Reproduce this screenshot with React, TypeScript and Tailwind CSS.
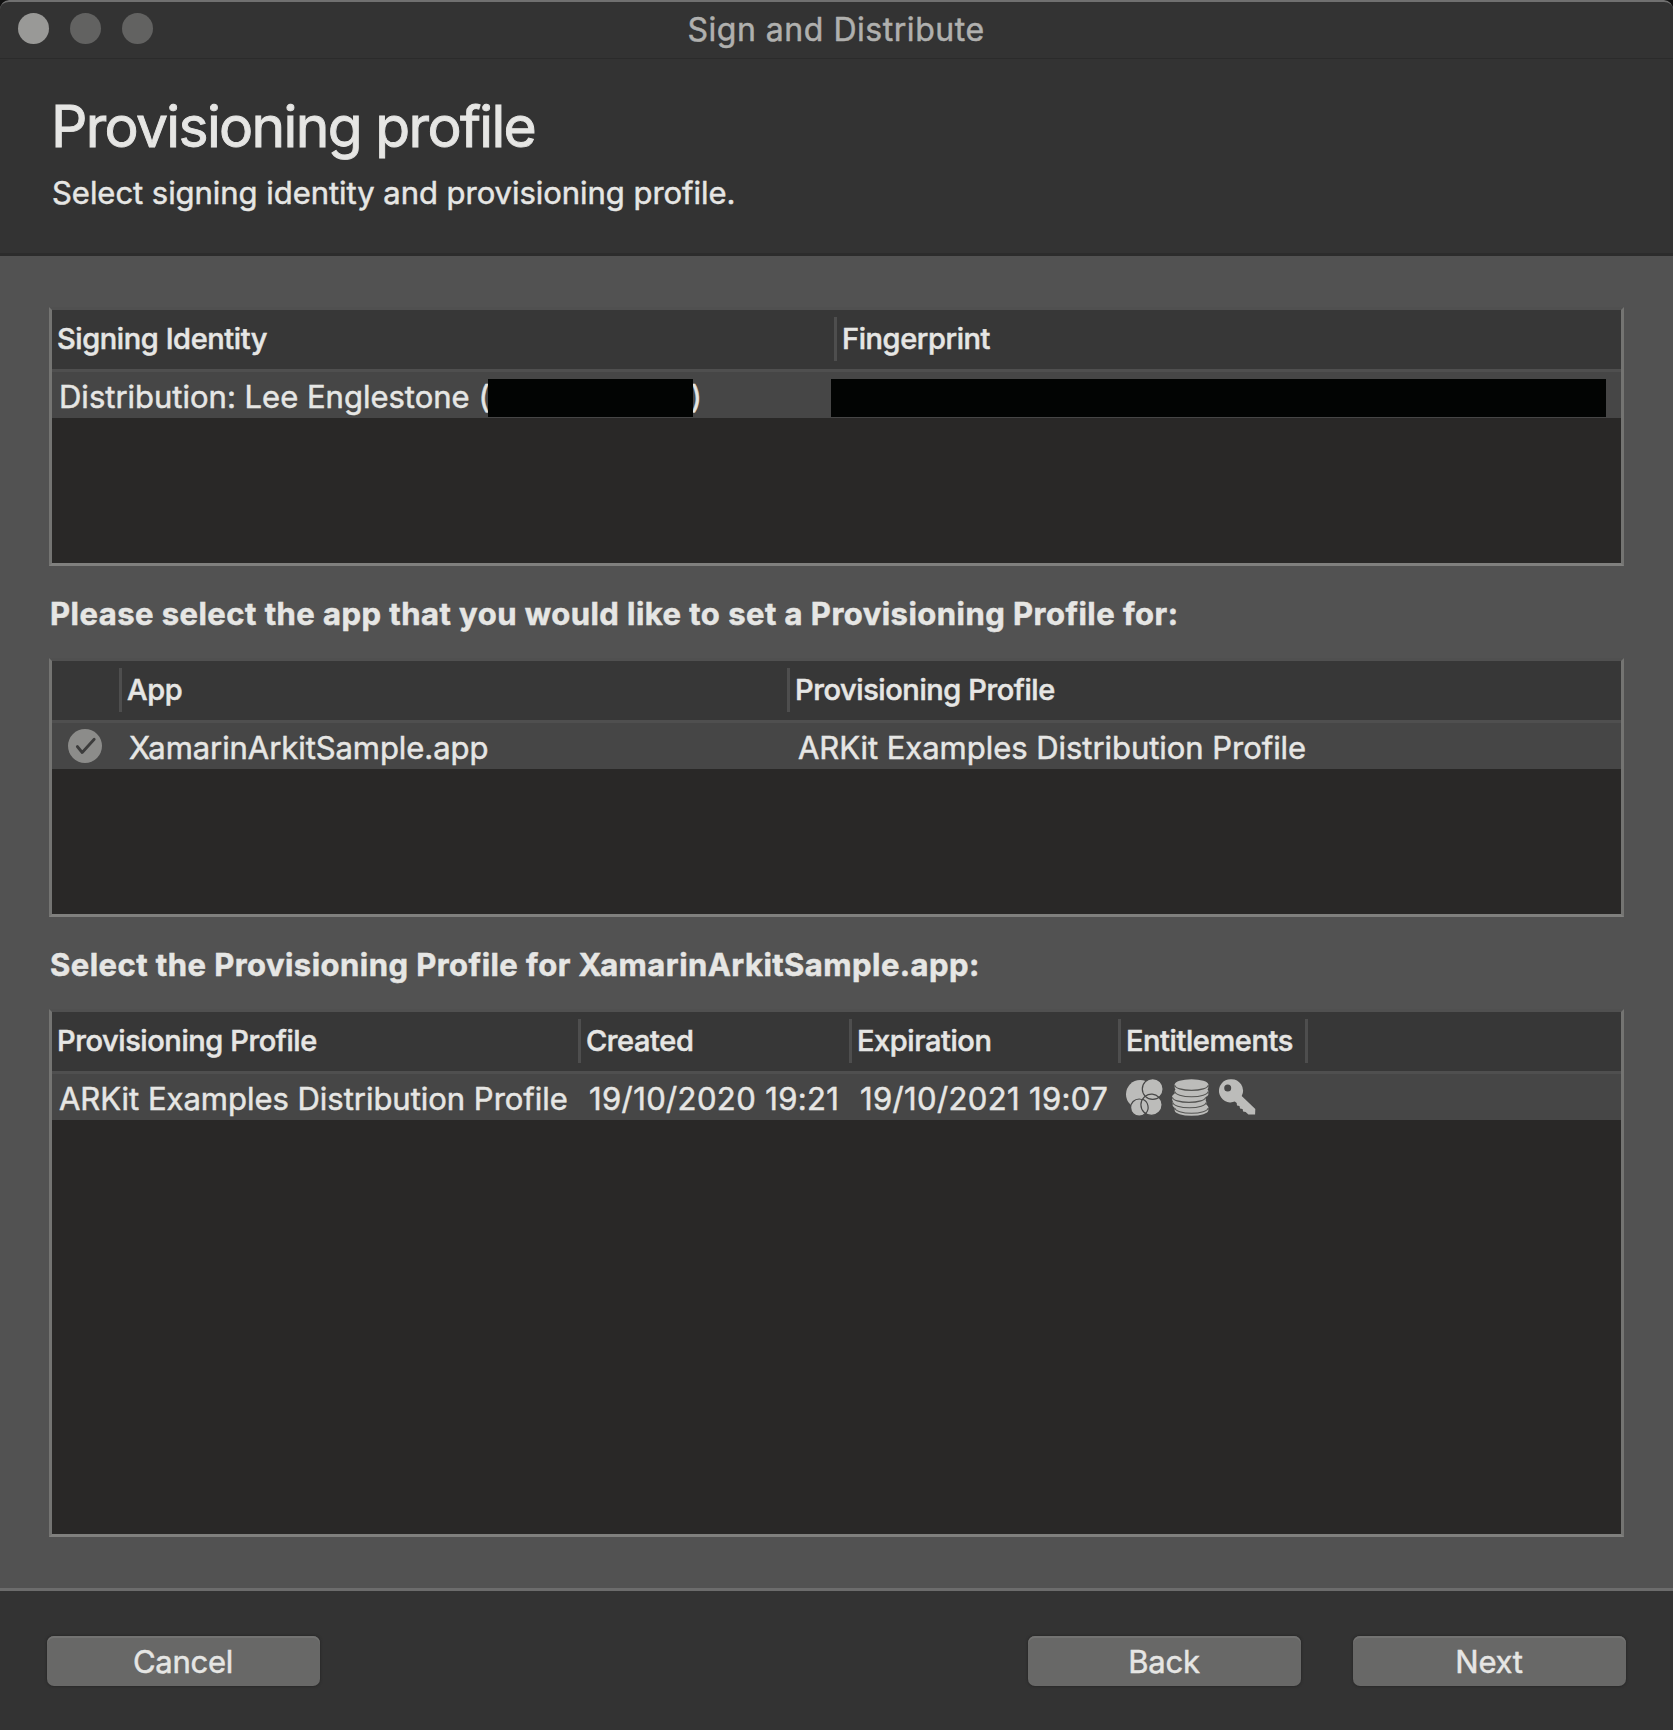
import React from "react";

type Column = { label?: string; width: string };

function Table({
  columns,
  className = "",
  children,
}: {
  columns: Column[];
  className?: string;
  children: React.ReactNode;
}) {
  return (
    <div
      className={`flex flex-col border-[3px] border-t-[#505050] border-x-[#747472] border-b-[#80807e] bg-[#292827] ${className}`}
    >
      <div className="flex h-[59px] shrink-0 items-center bg-[#373737] text-[29px] leading-10 font-medium">
        {columns.map((column, i) => (
          <div key={i} className={`flex h-full shrink-0 items-start pl-[5px] ${column.width}`}>
            <span className="mt-[9px] grow tracking-[-0.41px] whitespace-nowrap">{column.label}</span>
            {i < columns.length - 1 && <span className="mt-[7px] h-11 w-[3px] bg-[#4e4e4e]" />}
          </div>
        ))}
      </div>
      <div className="h-[3px] shrink-0 bg-[#4f4f4f]" />
      <div className="flex h-[46px] shrink-0 items-center bg-[#464646] pt-1 leading-10 whitespace-nowrap">
        {children}
      </div>
    </div>
  );
}

function CheckIcon() {
  return (
    <svg className="block" width="34" height="34" viewBox="0 0 34 34" fill="none">
      <circle cx="17" cy="17" r="17" fill="#8c8c8a" />
      <path d="M9.3 17.5l4.9 6L26.2 10.3" stroke="#3c3c3c" strokeWidth="2.8" strokeLinecap="round" strokeLinejoin="round" />
    </svg>
  );
}

function GameCenterIcon() {
  return (
    <svg className="block" width="37" height="37" viewBox="0 0 37 37">
      <g fill="#bcbcba" stroke="#464646" strokeWidth="1.2">
        <circle cx="14.2" cy="15.2" r="14.2" stroke="none" />
        <circle cx="13.2" cy="28.6" r="8.6" />
        <circle cx="25.5" cy="25.8" r="10.6" />
        <circle cx="26.7" cy="10" r="10.4" />
      </g>
      <g fill="none" stroke="#464646" strokeWidth="1.2">
        <path d="M19.2 17.2A10.6 10.6 0 0 1 33 18.3" />
        <path d="M16.6 20.3A8.6 8.6 0 0 1 19.6 34.4" />
      </g>
    </svg>
  );
}

function CoinsIcon() {
  const coins = [
    { x: 19.5, y: 28.4 },
    { x: 17.5, y: 23 },
    { x: 17, y: 17.6 },
    { x: 19.5, y: 12 },
    { x: 19.5, y: 5.6 },
  ];
  return (
    <svg className="block" width="37" height="37" viewBox="0 0 37 37">
      {coins.map(({ x, y }) => (
        <g key={y}>
          <path d={`M${x - 16.8} ${y}v3.2a16.8 5.2 0 0 0 33.6 0v-3.2z`} fill="#bcbcba" />
          <ellipse cx={x} cy={y} rx="16.8" ry="5.4" fill="#bcbcba" />
          <path
            d={`M${x - 16.6} ${y + 0.6}a16.6 5.2 0 0 0 33.2 0`}
            fill="none"
            stroke="#555553"
            strokeWidth="1.1"
          />
        </g>
      ))}
    </svg>
  );
}

function KeyIcon() {
  return (
    <svg className="block" width="37" height="37" viewBox="0 0 37 37">
      <path
        fillRule="evenodd"
        fill="#bcbcba"
        d="M11.5 .2a11.6 11.6 0 1 0 4.3 22.4l1.900 1.300.3 2.600 2.500.4.5 2.600 2.600.4.5 2.500 2.600.5 2.700 2.500 6.700.2.2-5.600L22.700 17.100A11.600 11.600 0 0 0 11.500.2zM8.700 5.600a3.500 3.500 0 1 1 0 7 3.500 3.500 0 0 1 0-7z"
      />
    </svg>
  );
}

function Button({ children, className = "" }: { children: React.ReactNode; className?: string }) {
  return (
    <button
      className={`flex h-[50px] w-[273px] items-center justify-center rounded-[7px] bg-[#686867] pt-px pr-px leading-10 tracking-[-0.25px] shadow-[0_0_2px_1px_#2a2a2a,inset_0_2px_0_#737372] ${className}`}
    >
      {children}
    </button>
  );
}

export default function App() {
  return (
    <div className="h-[1730px] w-[1673px] overflow-hidden bg-[#111] font-['Inter',sans-serif] text-[31px] text-[#e6e6e4] [-webkit-text-stroke:0.5px]">
      <div className="flex h-full flex-col overflow-hidden rounded-t-[9px] bg-[#333]">
        <div className="grid h-[59px] shrink-0 grid-cols-[1fr_auto_1fr] items-center rounded-t-[9px] border-t-2 border-b border-t-[#707070] border-b-[#2b2b2b]">
          <div className="flex gap-[21px] pl-[18px]">
            <span className="-mt-[3px] size-[31px] rounded-full bg-[#999997]" />
            <span className="-mt-[3px] size-[31px] rounded-full bg-[#626261]" />
            <span className="-mt-[3px] size-[31px] rounded-full bg-[#626261]" />
          </div>
          <div className="pr-px text-[32px] leading-10 tracking-[0.53px] text-[#b0b0ae]">Sign and Distribute</div>
        </div>

        <div className="h-[197px] shrink-0 border-b-[3px] border-[#2c2c2c] pt-[33px]">
          <h1 className="pl-[51px] text-[57px] leading-[70px] font-normal tracking-[-1.67px] [-webkit-text-stroke:0.9px]">
            Provisioning profile
          </h1>
          <p className="mt-[11px] pl-[52px] leading-10 tracking-[-0.04px]">
            Select signing identity and provisioning profile.
          </p>
        </div>

        <div className="flex grow flex-col bg-[#525252] px-[49px] pt-[51px]">
          <Table
            className="h-[259px]"
            columns={[
              { label: "Signing Identity", width: "w-[785px]" },
              { label: "Fingerprint", width: "w-[784px]" },
            ]}
          >
            <div className="flex w-[785px] pl-[7px]">
              <span>Distribution: Lee Englestone (</span>
              <span className="z-10 mt-[2px] -ml-[2px] h-[38px] w-[205px] bg-[#020403]" />
              <span className="-ml-[2px]">)</span>
            </div>
            <div className="mt-[2px] -ml-[6px] h-[38px] w-[775px] bg-[#020403]" />
          </Table>

          <h2 className="mt-7 pl-px leading-10 font-bold tracking-[0.47px]">
            Please select the app that you would like to set a Provisioning Profile for:
          </h2>

          <Table
            className="mt-6 h-[259px]"
            columns={[
              { width: "w-[70px]" },
              { label: "App", width: "w-[668px]" },
              { label: "Provisioning Profile", width: "w-[831px]" },
            ]}
          >
            <div className="-mt-1 w-[70px] pl-[16px]">
              <CheckIcon />
            </div>
            <div className="w-[668px] pl-[7px] tracking-[-0.07px]">XamarinArkitSample.app</div>
            <div className="pl-2 tracking-[-0.04px]">ARKit Examples Distribution Profile</div>
          </Table>

          <h2 className="mt-7 pl-px leading-10 font-bold tracking-[0.46px]">
            Select the Provisioning Profile for XamarinArkitSample.app:
          </h2>

          <Table
            className="mt-6 h-[528px]"
            columns={[
              { label: "Provisioning Profile", width: "w-[529px]" },
              { label: "Created", width: "w-[271px]" },
              { label: "Expiration", width: "w-[269px]" },
              { label: "Entitlements", width: "w-[187px]" },
              { width: "w-[313px]" },
            ]}
          >
            <div className="w-[529px] pl-[7px] tracking-[-0.02px]">ARKit Examples Distribution Profile</div>
            <div className="w-[271px] pl-2 tracking-[0.38px]">19/10/2020 19:21</div>
            <div className="w-[269px] pl-2 tracking-[0.36px]">19/10/2021 19:07</div>
            <div className="-mt-1 flex gap-[9.5px] pl-[4.5px]">
              <GameCenterIcon />
              <CoinsIcon />
              <KeyIcon />
            </div>
          </Table>
        </div>

        <div className="flex h-[142px] shrink-0 items-start border-t-[3px] border-[#6c6c6c] pt-[45px] pr-[47px] pl-[47px]">
          <Button>Cancel</Button>
          <Button className="ml-auto">Back</Button>
          <Button className="ml-[52px]">Next</Button>
        </div>
      </div>
    </div>
  );
}
